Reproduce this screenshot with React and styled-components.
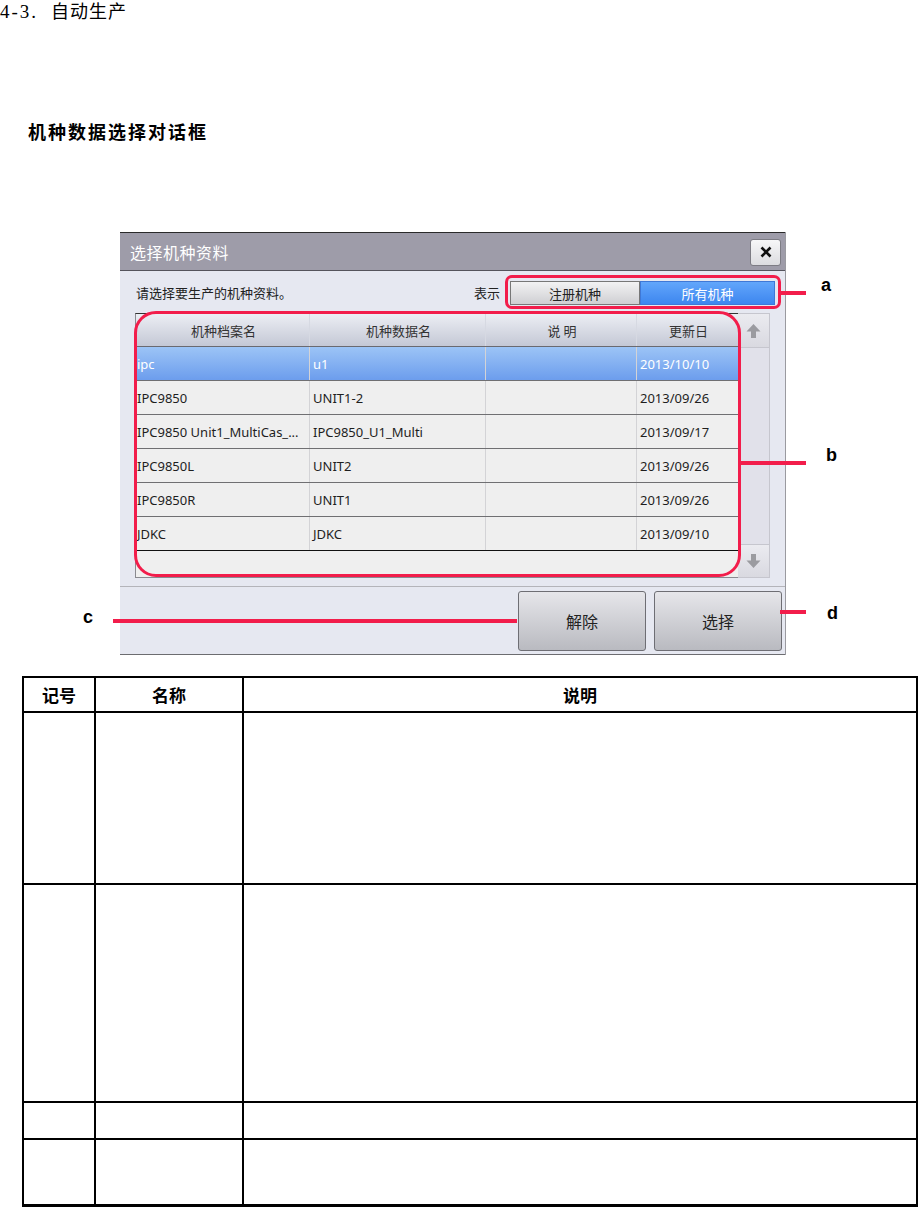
import React from "react";
import styled, { createGlobalStyle } from "styled-components";

const GlobalStyle = createGlobalStyle`
  html, body {
    margin: 0;
    padding: 0;
    background: #ffffff;
  }
  body {
    font-family: "Noto Sans", "Noto Sans CJK SC", sans-serif;
    color: #000;
  }
`;

const RED = "#f21d4b";

const Page = styled.div`
  width: 918px;
  position: relative;
`;

const Heading = styled.h1`
  margin: 0;
  height: 24px;
  line-height: 24px;
  font-family: "Liberation Serif", "Noto Sans CJK SC", serif;
  font-weight: 400;
  font-size: 18px;
  white-space: pre;
`;

const Num = styled.span`
  font-family: "Liberation Serif", serif;
  font-size: 19px;
  letter-spacing: 2px;
  margin-right: 13px;
`;

const Cjk = styled.span`
  letter-spacing: 1px;
`;

const SectionTitle = styled.h2`
  margin: 95px 0 0;
  padding-left: 28px;
  height: 24px;
  line-height: 24px;
  font-family: "Noto Sans CJK SC", sans-serif;
  font-weight: 700;
  font-size: 18px;
  letter-spacing: 2px;
`;

const Figure = styled.div`
  position: relative;
  margin-top: 89px;
  width: 918px;
`;

const Dialog = styled.div`
  margin-left: 120px;
  width: 666px;
  height: 423px;
  display: flex;
  flex-direction: column;
  background: #e6e8f1;
  border-right: 1px solid #9a9aa0;
  box-sizing: border-box;
  font-family: "Noto Sans CJK SC", sans-serif;
`;

const TitleBar = styled.div`
  height: 39px;
  box-sizing: border-box;
  border-top: 1px solid #2a2a2a;
  border-bottom: 1px solid #55545c;
  background: #9e9ca9;
  display: flex;
  align-items: center;
  justify-content: space-between;
  padding: 0 4px 0 10px;
`;

const TitleText = styled.span`
  color: #ffffff;
  font-size: 16px;
  letter-spacing: 0.5px;
`;

const CloseBtn = styled.button`
  width: 31px;
  height: 27px;
  padding: 0;
  border: 1px solid #7d7c84;
  border-radius: 3px;
  background: linear-gradient(#f7f7f8, #dcdce0);
  display: flex;
  align-items: center;
  justify-content: center;
  margin-top: 1px;
`;

const TopRow = styled.div`
  height: 42px;
  box-sizing: border-box;
  padding: 10px 10px 0 16px;
  display: flex;
  align-items: flex-start;
  justify-content: space-between;
`;

const Prompt = styled.span`
  font-size: 13px;
  line-height: 24px;
  color: #222;
`;

const ShowGroup = styled.div`
  display: flex;
  align-items: center;
`;

const ShowLabel = styled.span`
  font-size: 13px;
  line-height: 24px;
  color: #222;
  margin-right: 10px;
`;

const Toggle = styled.button`
  height: 24px;
  width: ${(p) => p.$w}px;
  padding: 0;
  font-family: "Noto Sans CJK SC", sans-serif;
  font-size: 13px;
  border: 1px solid ${(p) => (p.$active ? "#3f78d6" : "#777")};
  background: ${(p) =>
    p.$active
      ? "linear-gradient(#62a6fb, #3d86ef)"
      : "linear-gradient(#f2f2f3, #cfcfd2)"};
  color: ${(p) => (p.$active ? "#fff" : "#222")};
`;

const TableBlock = styled.div`
  margin-left: 15px;
  width: 635px;
  height: 265px;
  display: flex;
`;

const Grid = styled.div`
  width: 603px;
  display: flex;
  flex-direction: column;
  border-top: 1px solid #333;
  border-left: 1px solid #8a8a90;
  border-bottom: 1px solid #8a8a90;
  box-sizing: border-box;
  background: #efefef;
`;

const Row = styled.div`
  display: grid;
  grid-template-columns: 174px 176px 151px 101px;
  height: 34px;
  box-sizing: border-box;
  border-bottom: 1px solid ${(p) => (p.$last ? "#111" : "#6f6f72")};
  background: ${(p) =>
    p.$selected ? "linear-gradient(#9cc4f6, #6c9ded)" : "#efefef"};
  color: ${(p) => (p.$selected ? "#fff" : "#1e1e1e")};
`;

const HeadRow = styled(Row)`
  height: 33px;
  background: linear-gradient(#eceef4, #c4c8d5);
  border-bottom: 1px solid #6a6a70;
  color: #333;
`;

const Cell = styled.div`
  display: flex;
  align-items: center;
  justify-content: ${(p) => (p.$head ? "center" : "flex-start")};
  padding: 0 ${(p) => (p.$head ? 0 : 2)}px 0 ${(p) => (p.$pad ?? 2)}px;
  font-family: ${(p) =>
    p.$head ? `"Noto Sans CJK SC", sans-serif` : `"Noto Sans", "Noto Sans CJK SC", sans-serif`};
  font-size: 13px;
  white-space: nowrap;
  overflow: hidden;
  border-right: 1px solid ${(p) => (p.$head ? "#d6d9e2" : "#d3d3d6")};
  &:last-child {
    border-right: none;
  }
`;

const Filler = styled.div`
  flex: 1;
  background: #efefef;
`;

const Scrollbar = styled.div`
  width: 32px;
  display: flex;
  flex-direction: column;
  background: #e1e1ea;
  border: 1px solid #c6c6ce;
  border-left: none;
  box-sizing: border-box;
`;

const ScrollBtn = styled.div`
  height: ${(p) => p.$h}px;
  display: flex;
  align-items: center;
  justify-content: center;
  background: linear-gradient(#ebebf0, #d9d9e0);
  border-top: ${(p) => (p.$down ? "1px solid #c6c6ce" : "none")};
  border-bottom: ${(p) => (p.$down ? "none" : "1px solid #c6c6ce")};
  box-sizing: border-box;
`;

const Track = styled.div`
  flex: 1;
`;

const Footer = styled.div`
  margin-top: 8px;
  height: 69px;
  box-sizing: border-box;
  border-top: 1px solid #b4b4ba;
  border-bottom: 1px solid #6c6c70;
  display: flex;
  justify-content: flex-end;
  align-items: flex-start;
  gap: 8px;
  padding: 4px 3px 0 0;
`;

const BigBtn = styled.button`
  width: 128px;
  height: 60px;
  border: 1px solid #6e6e74;
  border-radius: 3px;
  background: linear-gradient(#e6e6ea, #b9bac0);
  font-family: "Noto Sans CJK SC", sans-serif;
  font-size: 16px;
  color: #222;
`;

const Outline = styled.div`
  position: absolute;
  left: ${(p) => p.$x}px;
  top: ${(p) => p.$y}px;
  width: ${(p) => p.$w}px;
  height: ${(p) => p.$h}px;
  border: 3px solid ${RED};
  border-radius: ${(p) => p.$r}px;
  box-sizing: border-box;
  pointer-events: none;
`;

const Leader = styled.div`
  position: absolute;
  left: ${(p) => p.$x}px;
  top: ${(p) => p.$y}px;
  width: ${(p) => p.$w}px;
  height: 4px;
  background: ${RED};
`;

const Tag = styled.span`
  position: absolute;
  left: ${(p) => p.$x}px;
  top: ${(p) => p.$y}px;
  font-family: "Liberation Sans", Arial, sans-serif;
  font-weight: 700;
  font-size: 18px;
  line-height: 20px;
`;

const DescTable = styled.table`
  margin: 21px 0 0 22px;
  width: 896px;
  table-layout: fixed;
  border-collapse: collapse;
  font-family: "Noto Sans CJK SC", sans-serif;
  border-bottom: 3px solid #000;
`;

const Th = styled.th`
  height: 33px;
  border: 2px solid #000;
  font-size: 17px;
  font-weight: 700;
  padding: 0;
`;

const Td = styled.td`
  height: ${(p) => p.$h}px;
  border: 2px solid #000;
  padding: 0;
`;

const Arrow = ({ down }) => (
  <svg width="15" height="16" viewBox="0 0 15 16" style={{ transform: down ? "rotate(180deg)" : "none" }}>
    <path d="M7.5 1 L14.5 8.5 H10 V15 H5 V8.5 H0.5 Z" fill="#9b9ba0" />
  </svg>
);

const rows = [
  ["ipc", "u1", "", "2013/10/10"],
  ["IPC9850", "UNIT1-2", "", "2013/09/26"],
  ["IPC9850 Unit1_MultiCas_...", "IPC9850_U1_Multi", "", "2013/09/17"],
  ["IPC9850L", "UNIT2", "", "2013/09/26"],
  ["IPC9850R", "UNIT1", "", "2013/09/26"],
  ["JDKC", "JDKC", "", "2013/09/10"],
];

const descRows = [170, 216, 35, 64];

export default function App() {
  return (
    <Page>
      <GlobalStyle />
      <Heading>
        <Num>4-3.</Num>
        <Cjk>自动生产</Cjk>
      </Heading>
      <SectionTitle>机种数据选择对话框</SectionTitle>

      <Figure>
        <Dialog>
          <TitleBar>
            <TitleText>选择机种资料</TitleText>
            <CloseBtn aria-label="close">
              <svg width="12" height="12" viewBox="0 0 12 12">
                <path d="M1.5 1.5 L10.5 10.5 M10.5 1.5 L1.5 10.5" stroke="#111" strokeWidth="2.6" />
              </svg>
            </CloseBtn>
          </TitleBar>

          <TopRow>
            <Prompt>请选择要生产的机种资料。</Prompt>
            <ShowGroup>
              <ShowLabel>表示</ShowLabel>
              <Toggle $w={130}>注册机种</Toggle>
              <Toggle $w={135} $active>所有机种</Toggle>
            </ShowGroup>
          </TopRow>

          <TableBlock>
            <Grid>
              <HeadRow>
                <Cell $head>机种档案名</Cell>
                <Cell $head>机种数据名</Cell>
                <Cell $head>说 明</Cell>
                <Cell $head>更新日</Cell>
              </HeadRow>
              {rows.map((r, i) => (
                <Row key={i} $selected={i === 0} $last={i === rows.length - 1}>
                  <Cell $pad={1}>{r[0]}</Cell>
                  <Cell $pad={3}>{r[1]}</Cell>
                  <Cell>{r[2]}</Cell>
                  <Cell $pad={3}>{r[3]}</Cell>
                </Row>
              ))}
              <Filler />
            </Grid>
            <Scrollbar>
              <ScrollBtn $h={34}>
                <Arrow />
              </ScrollBtn>
              <Track />
              <ScrollBtn $h={33} $down>
                <Arrow down />
              </ScrollBtn>
            </Scrollbar>
          </TableBlock>

          <Footer>
            <BigBtn>解除</BigBtn>
            <BigBtn>选择</BigBtn>
          </Footer>
        </Dialog>

        <Outline $x={505} $y={43} $w={276} $h={34} $r={7} />
        <Outline $x={134} $y={79} $w={607} $h={266} $r={22} />

        <Leader $x={780} $y={59} $w={26} />
        <Tag $x={821} $y={43}>a</Tag>
        <Leader $x={740} $y={229} $w={66} />
        <Tag $x={826} $y={213}>b</Tag>
        <Leader $x={113} $y={387} $w={404} />
        <Tag $x={83} $y={375}>c</Tag>
        <Leader $x={780} $y={378} $w={26} />
        <Tag $x={827} $y={371}>d</Tag>
      </Figure>

      <DescTable>
        <colgroup>
          <col style={{ width: 72 }} />
          <col style={{ width: 148 }} />
          <col />
        </colgroup>
        <thead>
          <tr>
            <Th>记号</Th>
            <Th>名称</Th>
            <Th>说明</Th>
          </tr>
        </thead>
        <tbody>
          {descRows.map((h, i) => (
            <tr key={i}>
              <Td $h={h} />
              <Td $h={h} />
              <Td $h={h} />
            </tr>
          ))}
        </tbody>
      </DescTable>
    </Page>
  );
}
